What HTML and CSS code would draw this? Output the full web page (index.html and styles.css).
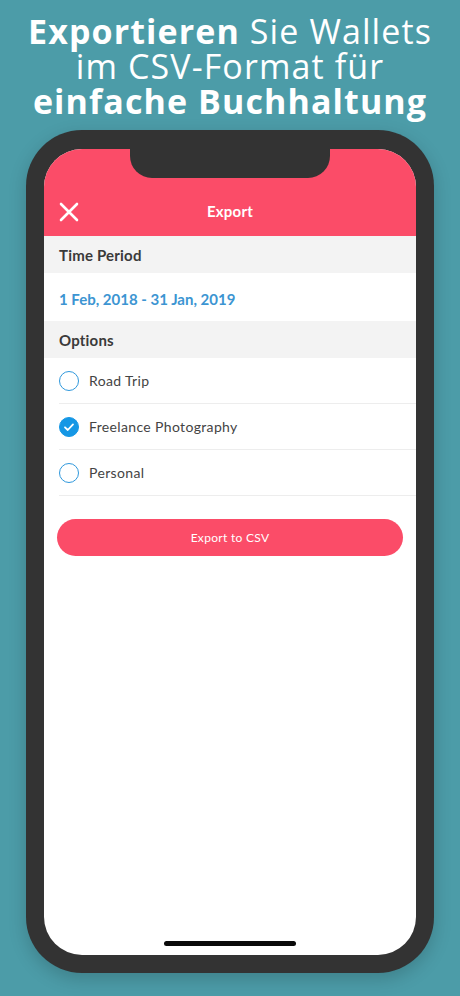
FILE: index.html
```html
<!DOCTYPE html>
<html lang="de">
<head>
<meta charset="utf-8">
<link rel="stylesheet" href="styles.css">
</head>
<body>
<div class="page">
  <h1 class="title">
    <span class="line"><b>Exportieren</b> Sie Wallets</span>
    <span class="line">im CSV-Format für</span>
    <span class="line"><b>einfache Buchhaltung</b></span>
  </h1>
  <div class="phone">
    <div class="screen">
      <div class="notch"></div>
      <header class="navbar">
        <svg class="close" width="20" height="20" viewBox="0 0 20 20"><path d="M2 2 L18 18 M18 2 L2 18" stroke="#fff" stroke-width="2.6" stroke-linecap="round"/></svg>
        <span class="nav-title">Export</span>
      </header>
      <div class="section-head">Time Period</div>
      <div class="date-row">1 Feb, 2018 - 31 Jan, 2019</div>
      <div class="section-head">Options</div>
      <ul class="options">
        <li class="option">
          <span class="radio"></span>
          <span class="label">Road Trip</span>
        </li>
        <li class="option">
          <span class="radio checked"><svg width="20" height="20" viewBox="0 0 20 20"><path d="M6 10.3 L8.8 13 L14 7.4" fill="none" stroke="#fff" stroke-width="1.8" stroke-linecap="round" stroke-linejoin="round"/></svg></span>
          <span class="label">Freelance Photography</span>
        </li>
        <li class="option">
          <span class="radio"></span>
          <span class="label">Personal</span>
        </li>
      </ul>
      <div class="btn-wrap"><button class="export-btn">Export to CSV</button></div>
      <div class="spacer"></div>
      <div class="home-indicator"></div>
    </div>
  </div>
</div>
</body>
</html>
```
FILE: styles.css
```css
* { box-sizing: border-box; }
html, body { margin: 0; padding: 0; }
body {
  background: #4c9ca8;
  width: 460px;
  height: 996px;
  overflow: hidden;
}
.page {
  display: flex;
  flex-direction: column;
  align-items: center;
}
.title {
  margin: 14px 0 0;
  font-family: "Open Sans", sans-serif;
  font-weight: 400;
  font-size: 34px;
  line-height: 35px;
  color: #fff;
  text-align: center;
  display: flex;
  flex-direction: column;
  align-items: center;
  letter-spacing: 1.1px;
}
.title b { font-weight: 700; }
.line { display: block; }
.phone {
  margin-top: 11px;
  width: 408px;
  height: 843px;
  background: #333333;
  border-radius: 56px;
  padding: 19px 18px 18px;
  box-shadow: 0 6px 18px rgba(0, 0, 0, 0.18);
}
.screen {
  position: relative;
  width: 372px;
  height: 806px;
  background: #ffffff;
  border-radius: 38px;
  overflow: hidden;
  display: flex;
  flex-direction: column;
  font-family: "Lato", sans-serif;
}
.notch {
  position: absolute;
  z-index: 2;
  left: 86px;
  top: 0;
  width: 200px;
  height: 29px;
  background: #333333;
  border-radius: 0 0 22px 22px;
}
.navbar {
  height: 87px;
  background: #fb4c68;
  display: flex;
  align-items: flex-end;
  justify-content: center;
  position: relative;
  padding-bottom: 16px;
}
.close {
  position: absolute;
  left: 15px;
  bottom: 14px;
}
.nav-title {
  color: #fff;
  font-size: 15px;
  font-weight: 700;
  letter-spacing: 0.2px;
}
.section-head {
  height: 37px;
  background: #f3f3f3;
  display: flex;
  align-items: center;
  padding-left: 15px;
  font-size: 15px;
  font-weight: 700;
  color: #3a3a3a;
  letter-spacing: 0.2px;
}
.date-row {
  height: 48px;
  display: flex;
  align-items: center;
  padding: 4px 0 0 15px;
  font-size: 15px;
  font-weight: 700;
  color: #3c95d2;
  letter-spacing: 0;
}
.options {
  list-style: none;
  margin: 0;
  padding: 0 0 0 15px;
}
.option {
  height: 46px;
  display: flex;
  align-items: center;
  gap: 10px;
  border-bottom: 1px solid #ededed;
}
.radio {
  width: 20px;
  height: 20px;
  border-radius: 50%;
  border: 1.5px solid #2f98dc;
  display: flex;
  align-items: center;
  justify-content: center;
}
.radio.checked {
  background: #1597e5;
  border-color: #1597e5;
}
.radio svg { display: block; flex: none; }
.label {
  font-size: 14px;
  color: #444444;
  letter-spacing: 0.35px;
}
.btn-wrap {
  padding: 23px 13px 0;
}
.export-btn {
  width: 100%;
  height: 37px;
  border: none;
  border-radius: 19px;
  background: #fb4c68;
  color: #fff;
  font-family: "Lato", sans-serif;
  font-size: 12px;
  letter-spacing: 0.3px;
}
.spacer { flex: 1; }
.home-indicator {
  align-self: center;
  width: 132px;
  height: 5px;
  border-radius: 3px;
  background: #0a0a0a;
  margin-bottom: 9px;
}
```
